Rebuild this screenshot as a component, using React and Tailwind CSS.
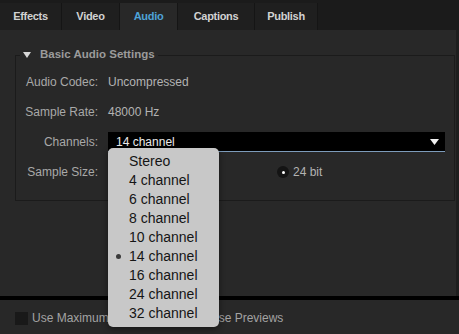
import { useState } from 'react'

const tabs = ['Effects', 'Video', 'Audio', 'Captions', 'Publish']
const tabWidths = {
  Effects: 'w-[62px]',
  Video: 'w-[58px]',
  Audio: 'w-[58px]',
  Captions: 'w-[77px]',
  Publish: 'w-[63px]',
}

const channelOptions = [
  'Stereo',
  '4 channel',
  '6 channel',
  '8 channel',
  '10 channel',
  '14 channel',
  '16 channel',
  '24 channel',
  '32 channel',
]

function Row({ label, children }) {
  return (
    <div className="flex h-[30px] items-center">
      <span className="w-[82px] shrink-0 text-right text-[#a9a9a9]">{label}</span>
      <div className="ml-[10px] flex flex-1 items-center">{children}</div>
    </div>
  )
}

function Radio({ label, checked }) {
  return (
    <span className="flex items-center gap-[4px]">
      <span className="flex h-[12px] w-[12px] items-center justify-center rounded-full bg-[#141414]">
        {checked ? <span className="h-[3px] w-[3px] rounded-full bg-white" /> : null}
      </span>
      <span className="text-[#b3b3b3]">{label}</span>
    </span>
  )
}

export default function App() {
  const [activeTab] = useState('Audio')
  const [channel] = useState('14 channel')

  return (
    <div
      className="relative flex h-[334px] w-[459px] flex-col overflow-hidden bg-[#282828] text-[12px]"
      style={{ fontFamily: '"Liberation Sans", Arial, sans-serif' }}
    >
      {/* tab strip */}
      <div className="flex h-[30px] shrink-0 items-end bg-[#1b1b1b]">
        {tabs.map((tab) => (
          <div
            key={tab}
            className={`flex h-[27px] items-center justify-center border-r border-[#151515] text-[11px] font-bold tracking-[-0.3px] ${tabWidths[tab]} ${
              tab === activeTab ? 'bg-[#282828] text-[#4ea3d8]' : 'bg-[#1f1f1f] text-[#d2d2d2]'
            }`}
          >
            {tab}
          </div>
        ))}
      </div>

      {/* settings area */}
      <div className="flex-1 border-r-[3px] border-[#1e1e1e] pt-[17px]">
        <fieldset className="ml-[15px] w-[440px] border border-[#1b1b1b] pb-[13px] pt-[4px]">
          <legend className="ml-[4px] flex h-[16px] items-center gap-[9px] px-[3px] text-[11.5px] font-bold text-[#9b9b9b]">
            <svg width="8" height="6" viewBox="0 0 8 6">
              <path d="M0 0 H8 L4 6 Z" fill="#d8d8d8" />
            </svg>
            Basic Audio Settings
          </legend>

          <Row label="Audio Codec:">
            <span className="text-[#b3b3b3]">Uncompressed</span>
          </Row>
          <Row label="Sample Rate:">
            <span className="text-[#b3b3b3]">48000 Hz</span>
          </Row>
          <Row label="Channels:">
            <div className="mr-[9px] flex h-[20px] flex-1 items-center justify-between border-b border-[#7d9cbb] bg-black pl-[8px] pr-[6px]">
              <span className="text-[#ececec]">{channel}</span>
              <svg width="9" height="6" viewBox="0 0 9 6">
                <path d="M0 0 H9 L4.5 6 Z" fill="#f2f2f2" />
              </svg>
            </div>
          </Row>
          <Row label="Sample Size:">
            <span className="w-[169px]" />
            <Radio label="24 bit" checked />
          </Row>
        </fieldset>
      </div>

      <div className="h-[4px] shrink-0 bg-black" />

      {/* bottom options */}
      <div className="flex h-[34px] shrink-0 items-center pl-[15px] pt-[2px] text-[#a3a3a3]">
        <span className="h-[13px] w-[13px] bg-[#191919]" />
        <span className="ml-[4px] w-[161px]">Use Maximum Render Quality</span>
        <span className="h-[13px] w-[13px] bg-[#191919]" />
        <span className="ml-[4px]">Use Previews</span>
      </div>

      {/* open channel menu */}
      <div className="absolute left-[108px] top-[148px] w-[111px] rounded-[5px] bg-[#c8c8c8] py-[4px] text-[14px] text-[#151515] shadow-[0_2px_6px_rgba(0,0,0,0.45)]">
        {channelOptions.map((option) => (
          <div key={option} className="relative flex h-[19px] items-center pl-[21px]">
            {option === channel ? (
              <span className="absolute left-[8px] top-[7px] h-[5px] w-[5px] rounded-full bg-[#3a3a3a]" />
            ) : null}
            {option}
          </div>
        ))}
      </div>
    </div>
  )
}
